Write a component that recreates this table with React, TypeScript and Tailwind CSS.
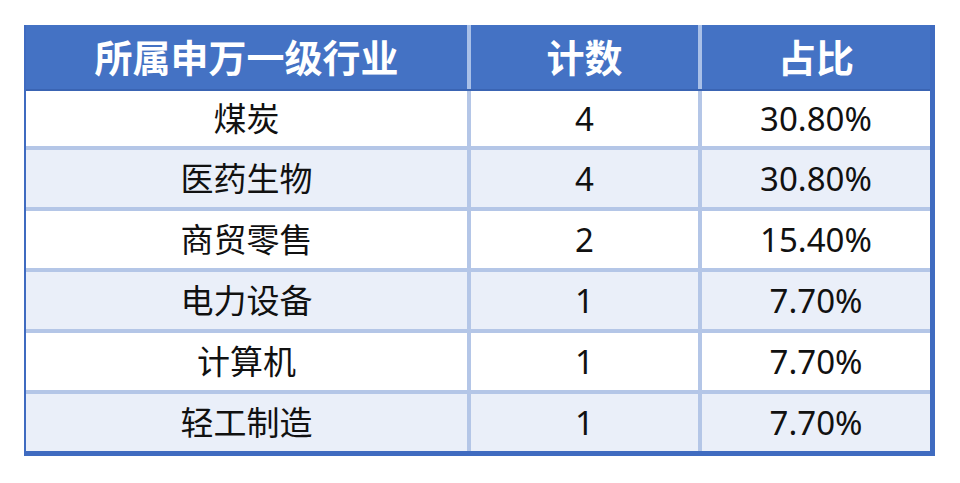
const rows = [
  { name: "煤炭", count: "4", pct: "30.80%" },
  { name: "医药生物", count: "4", pct: "30.80%" },
  { name: "商贸零售", count: "2", pct: "15.40%" },
  { name: "电力设备", count: "1", pct: "7.70%" },
  { name: "计算机", count: "1", pct: "7.70%" },
  { name: "轻工制造", count: "1", pct: "7.70%" },
];

const font = { fontFamily: '"Noto Sans", "Noto Sans CJK SC", sans-serif' };

export default function App() {
  return (
    <div className="w-[960px] h-[483px] bg-white pt-[25px] pl-[24px]" style={font}>
      <div className="w-[911px] border-l-2 border-r-[5px] border-b-[5px] border-[#3f6bc0]">
        {/* header */}
        <div className="flex h-[66px] bg-[#4472c4] text-white font-bold text-[38px] leading-none border-b-2 border-[#3a64b3]">
          <div className="w-[441px] flex items-center justify-center">所属申万一级行业</div>
          <div className="w-[4px] bg-[#a9c0e8]" />
          <div className="w-[227px] flex items-center justify-center">计数</div>
          <div className="w-[4px] bg-[#a9c0e8]" />
          <div className="w-[228px] flex items-center justify-center">占比</div>
        </div>

        {rows.map((r, i) => (
          <div
            key={i}
            className={`flex text-[33px] leading-none text-[#111] ${
              i % 2 === 0 ? "bg-white" : "bg-[#eaeff9]"
            } ${i > 0 ? "border-t-4 border-[#b4c6e7]" : ""} ${i === 0 ? "h-[55px]" : "h-[61px]"}`}
          >
            <div className="w-[441px] flex items-center justify-center">{r.name}</div>
            <div className="w-[4px] bg-[#b4c6e7]" />
            <div className="w-[227px] flex items-center justify-center">{r.count}</div>
            <div className="w-[4px] bg-[#b4c6e7]" />
            <div className="w-[228px] flex items-center justify-center">{r.pct}</div>
          </div>
        ))}
      </div>
    </div>
  );
}
